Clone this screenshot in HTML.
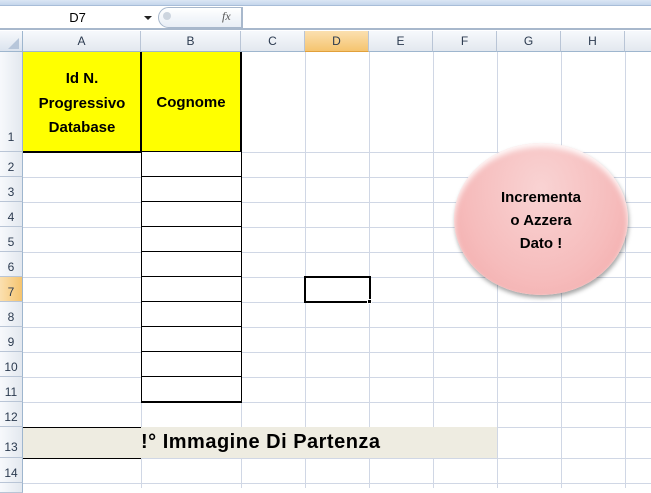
<!DOCTYPE html><html><head><style>
body{margin:0;width:651px;height:488px;overflow:hidden;background:#fff;font-family:"Liberation Sans",Arial,sans-serif;position:relative}
div{position:absolute;box-sizing:border-box}
.ch{top:31px;height:21px;background:linear-gradient(#f7f9fc,#e3e8ef);border-right:1px solid #b9c5d6;border-bottom:1px solid #9eb6ce;font-size:12px;color:#2b3a4f;text-align:center;line-height:21px}
.rh{left:0;width:23px;background:linear-gradient(90deg,#f7f9fc,#e3e8ef);border-right:1px solid #9eb6ce;border-bottom:1px solid #b9c5d6;font-size:12px;color:#2b3a4f;text-align:center}
.vl{top:52px;width:1px;height:436px;background:#d0d7e5}
.hl{left:23px;width:628px;height:1px;background:#d0d7e5}
.b{font-weight:bold;font-family:"Liberation Sans",Calibri,sans-serif}
</style></head><body>
<div style="left:0;top:0;width:651px;height:6px;background:linear-gradient(#dbe6f4,#c5d6ec);border-bottom:1px solid #a8bdd8"></div>
<div style="left:0;top:6px;width:651px;height:24px;background:#fff;border-bottom:2px solid #a8b8cc"></div>
<div style="left:0;top:8px;width:155px;height:20px;font-size:13px;text-align:center;line-height:20px;color:#000">D7</div>
<div style="left:144px;top:16px;width:0;height:0;border-left:4px solid transparent;border-right:4px solid transparent;border-top:4px solid #222"></div>
<div style="left:158px;top:7px;width:84px;height:21px;border:1px solid #a8b8cc;border-radius:11px 0 0 11px;background:linear-gradient(#fff,#e8eef6)"></div>
<div style="left:163px;top:12px;width:8px;height:8px;border-radius:50%;background:#cdd5df"></div>
<div style="left:222px;top:9px;font-size:12px;font-style:italic;font-family:'Liberation Serif',serif;color:#555">fx</div>
<div style="left:242px;top:7px;width:1px;height:21px;background:#a8b8cc"></div>
<div style="left:0;top:31px;width:23px;height:21px;background:linear-gradient(#f7f9fc,#dbe3ee);border-right:1px solid #9eb6ce;border-bottom:1px solid #9eb6ce"></div>
<div style="left:8px;top:38px;width:0;height:0;border-left:11px solid transparent;border-bottom:11px solid #b7c6da"></div>
<div class="ch" style="left:23px;width:118px">A</div>
<div class="ch" style="left:141px;width:100px">B</div>
<div class="ch" style="left:241px;width:64px">C</div>
<div class="ch" style="left:305px;width:64px;background:linear-gradient(#fbe0b0,#f5c46f);border-bottom:1px solid #e1a03b">D</div>
<div class="ch" style="left:369px;width:64px">E</div>
<div class="ch" style="left:433px;width:64px">F</div>
<div class="ch" style="left:497px;width:64px">G</div>
<div class="ch" style="left:561px;width:64px">H</div>
<div class="ch" style="left:625px;width:40px"></div>
<div class="rh" style="top:52px;height:100px;line-height:170px">1</div>
<div class="rh" style="top:152px;height:25px;line-height:30px">2</div>
<div class="rh" style="top:177px;height:25px;line-height:30px">3</div>
<div class="rh" style="top:202px;height:25px;line-height:30px">4</div>
<div class="rh" style="top:227px;height:25px;line-height:30px">5</div>
<div class="rh" style="top:252px;height:25px;line-height:30px">6</div>
<div class="rh" style="top:277px;height:25px;line-height:30px;background:linear-gradient(90deg,#fbe0b0,#f5c46f)">7</div>
<div class="rh" style="top:302px;height:25px;line-height:30px">8</div>
<div class="rh" style="top:327px;height:25px;line-height:30px">9</div>
<div class="rh" style="top:352px;height:25px;line-height:30px">10</div>
<div class="rh" style="top:377px;height:25px;line-height:30px">11</div>
<div class="rh" style="top:402px;height:25px;line-height:30px">12</div>
<div class="rh" style="top:427px;height:31px;line-height:40px">13</div>
<div class="rh" style="top:458px;height:25px;line-height:30px">14</div>
<div class="rh" style="top:483px;height:10px"></div>
<div class="vl" style="left:141px"></div><div class="vl" style="left:241px"></div><div class="vl" style="left:305px"></div><div class="vl" style="left:369px"></div><div class="vl" style="left:433px"></div><div class="vl" style="left:497px"></div><div class="vl" style="left:561px"></div><div class="vl" style="left:625px"></div>
<div class="hl" style="top:152px"></div><div class="hl" style="top:177px"></div><div class="hl" style="top:202px"></div><div class="hl" style="top:227px"></div><div class="hl" style="top:252px"></div><div class="hl" style="top:277px"></div><div class="hl" style="top:302px"></div><div class="hl" style="top:327px"></div><div class="hl" style="top:352px"></div><div class="hl" style="top:377px"></div><div class="hl" style="top:402px"></div><div class="hl" style="top:427px"></div><div class="hl" style="top:458px"></div><div class="hl" style="top:483px"></div>
<div style="left:23px;top:52px;width:219px;height:101px;background:#ff0;border-bottom:2px solid #000"></div>
<div style="left:140px;top:52px;width:2px;height:101px;background:#000"></div>
<div style="left:240px;top:52px;width:2px;height:101px;background:#000"></div>
<div class="b" style="left:23px;top:67px;width:118px;text-align:center;font-size:15px;line-height:24.5px">Id N.<br>Progressivo<br>Database</div>
<div class="b" style="left:141px;top:94px;width:100px;text-align:center;font-size:15px">Cognome</div>
<div style="left:141px;top:152px;width:101px;height:251px;border:1px solid #000;border-top:none;background:repeating-linear-gradient(#fff 0 24px,#000 24px 25px)"></div>
<div style="left:23px;top:427px;width:474px;height:31px;background:#eeece1"></div>
<div style="left:23px;top:427px;width:118px;height:1px;background:#000"></div>
<div style="left:23px;top:458px;width:118px;height:1px;background:#000"></div>
<div class="b" style="left:141px;top:431px;font-size:20px;letter-spacing:0.5px;white-space:nowrap">!° Immagine Di Partenza</div>
<div style="left:304px;top:276px;width:67px;height:27px;border:2px solid #000"></div>
<div style="left:367px;top:299px;width:5px;height:5px;background:#000;border:1px solid #fff"></div>
<div style="left:454px;top:143px;width:174px;height:152px;border-radius:50%;background:radial-gradient(ellipse at 50% 30%,#f9d3d3,#f6bcbc 60%,#f2a8a8);box-shadow:1px 3px 4px rgba(0,0,0,.35),inset 0 4px 6px rgba(255,255,255,.9)"></div>
<div class="b" style="left:454px;top:186px;width:174px;text-align:center;font-size:15px;line-height:23px">Incrementa<br>o Azzera<br>Dato !</div>
</body></html>
